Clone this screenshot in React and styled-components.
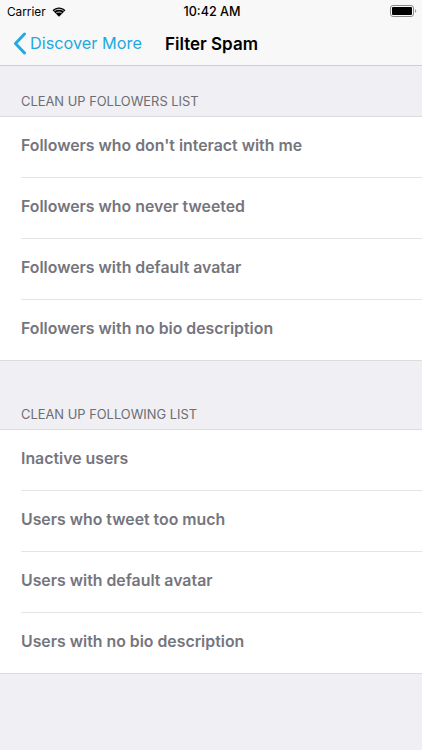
import React from "react";
import styled, { createGlobalStyle } from "styled-components";

const GlobalStyle = createGlobalStyle`
	html, body {
		margin: 0;
		padding: 0;
		background: #efeff4;
		font-family: Inter, "Liberation Sans", sans-serif;
		overflow: hidden;
	}
`;

const Page = styled.div`
	width: 422px;
	height: 750px;
	background: #efeff4;
	overflow: hidden;
`;

const Header = styled.header`
	height: 65px;
	background: #f8f8f8;
	border-bottom: 1px solid #cfcfd3;
`;

const StatusBar = styled.div`
	height: 22px;
	display: grid;
	grid-template-columns: 1fr auto 1fr;
	align-items: center;
	padding: 0 7px;
	color: #000;
`;

const StatusLeft = styled.div`
	display: flex;
	align-items: center;
	gap: 6px;
	font-size: 11.8px;
	line-height: 14px;
	padding-top: 1px;
`;

const Clock = styled.div`
	font-size: 12.6px;
	font-weight: 500;
	padding-left: 2px;
`;

const StatusRight = styled.div`
	display: flex;
	justify-content: flex-end;
	margin-right: -2px;
`;

const NavBar = styled.nav`
	height: 43px;
	display: flex;
	align-items: center;
	padding-left: 13px;
`;

const BackLink = styled.div`
	display: flex;
	align-items: center;
	gap: 3px;
	color: #22a9e0;
	font-size: 16.3px;
	line-height: 20px;
	width: 152px;
`;

const BackLabel = styled.span`
	margin-bottom: 1px;
`;

const Title = styled.div`
	font-size: 17px;
	font-weight: 600;
	color: #000;
`;

const SectionTitle = styled.div`
	height: ${(p) => p.$height}px;
	box-sizing: border-box;
	display: flex;
	align-items: flex-end;
	padding: 0 21px 7px;
	font-size: 12.9px;
	color: #6d6d72;
`;

const List = styled.div`
	background: #fff;
	border-top: 1px solid #dcdce0;
	border-bottom: 1px solid #dcdce0;
`;

const Row = styled.div`
	height: 60px;
	display: flex;
	align-items: center;
	margin-left: 21px;
	font-size: 15.85px;
	font-weight: 600;
	color: #75757e;
	& + & {
		border-top: 1px solid #e4e4e7;
	}
`;

const RowLabel = styled.span`
	margin-bottom: 4px;
`;

const followers = [
	"Followers who don't interact with me",
	"Followers who never tweeted",
	"Followers with default avatar",
	"Followers with no bio description",
];

const following = [
	"Inactive users",
	"Users who tweet too much",
	"Users with default avatar",
	"Users with no bio description",
];

const WifiIcon = () => (
	<svg width="14" height="10" viewBox="0 0 15 11">
		<path d="M7.5 10.8 0.4 3.6C4.4-.3 10.600-.3 14.600 3.600Z" fill="#000" />
		<path d="M2.4 4.300C5.300 1.900 9.700 1.900 12.600 4.300" fill="none" stroke="#f8f8f8" strokeWidth="1" />
		<path d="M4.500 6.500C6.200 5.200 8.800 5.200 10.500 6.500" fill="none" stroke="#f8f8f8" strokeWidth="1" />
	</svg>
);

const BatteryIcon = () => (
	<svg width="27" height="12" viewBox="0 0 27 12">
		<rect x="0.500" y="0.500" width="23" height="11" rx="2.500" fill="none" stroke="#8a8a8a" />
		<rect x="2" y="2" width="20" height="8" rx="1" fill="#000" />
		<path d="M25 4.200c.8.200 1.200.8 1.200 1.800s-.4 1.600-1.200 1.800Z" fill="#9a9a9a" />
	</svg>
);

const BackChevron = () => (
	<svg width="14" height="23" viewBox="0 0 14 23">
		<path d="M11.500 2 2.500 11.500l9 9.500" fill="none" stroke="#22a9e0" strokeWidth="3" strokeLinecap="round" strokeLinejoin="round" />
	</svg>
);

const App = () => (
	<Page>
		<GlobalStyle />
		<Header>
			<StatusBar>
				<StatusLeft>
					Carrier
					<WifiIcon />
				</StatusLeft>
				<Clock>10:42 AM</Clock>
				<StatusRight>
					<BatteryIcon />
				</StatusRight>
			</StatusBar>
			<NavBar>
				<BackLink>
					<BackChevron />
					<BackLabel>Discover More</BackLabel>
				</BackLink>
				<Title>Filter Spam</Title>
			</NavBar>
		</Header>
		<section>
			<SectionTitle $height={50}>CLEAN UP FOLLOWERS LIST</SectionTitle>
			<List>
				{followers.map((text) => (
					<Row key={text}>
						<RowLabel>{text}</RowLabel>
					</Row>
				))}
			</List>
		</section>
		<section>
			<SectionTitle $height={68}>CLEAN UP FOLLOWING LIST</SectionTitle>
			<List>
				{following.map((text) => (
					<Row key={text}>
						<RowLabel>{text}</RowLabel>
					</Row>
				))}
			</List>
		</section>
	</Page>
);

export default App;
